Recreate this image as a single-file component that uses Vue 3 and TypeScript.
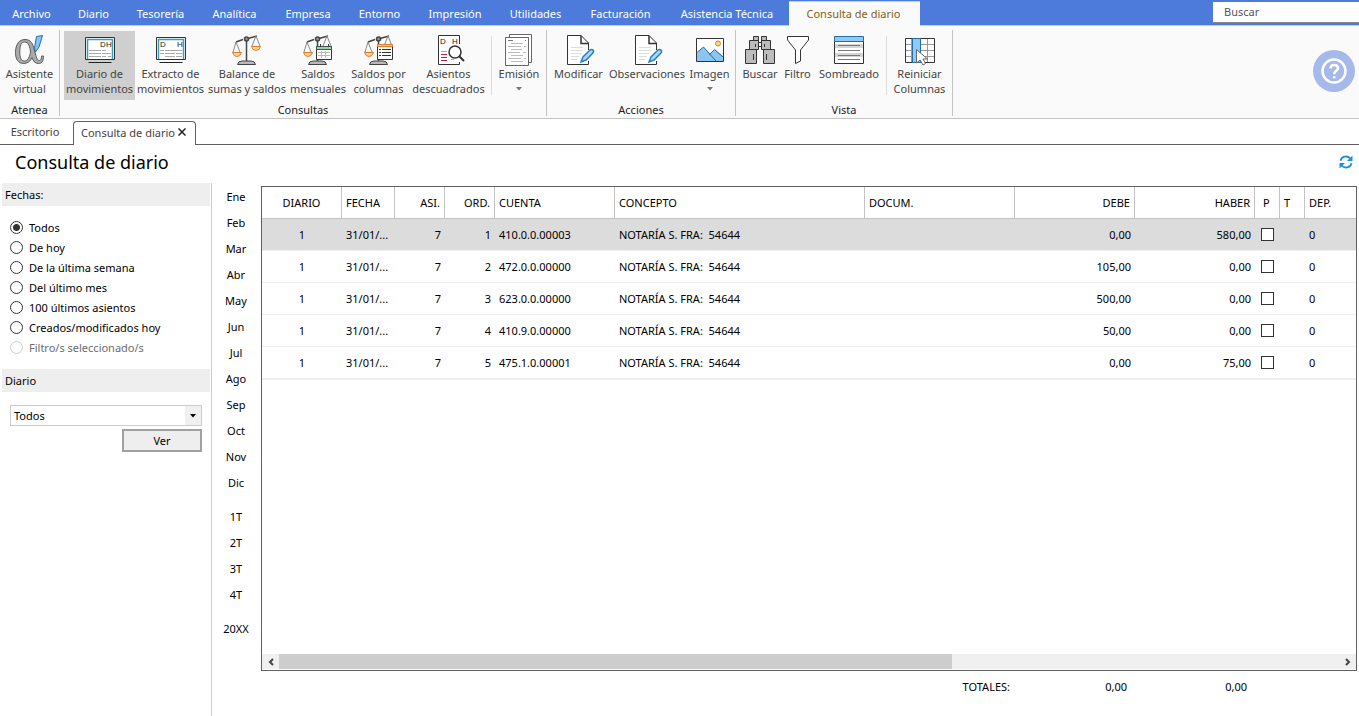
<script setup lang="ts">
import { ref } from 'vue'

interface Tool { icon: string; lines: string[]; width: number; active?: boolean; drop?: boolean; sep?: boolean }
interface Group { label: string; tight?: boolean; tools: Tool[] }

const menus = ['Archivo', 'Diario', 'Tesorería', 'Analítica', 'Empresa', 'Entorno', 'Impresión', 'Utilidades', 'Facturación', 'Asistencia Técnica', 'Consulta de diario']

const groups: Group[] = [
  { label: 'Atenea', tight: true, tools: [{ icon: 'alpha', lines: ['Asistente', 'virtual'], width: 57 }] },
  {
    label: 'Consultas',
    tight: true,
    tools: [
      { icon: 'journal', lines: ['Diario de', 'movimientos'], width: 71, active: true },
      { icon: 'extract', lines: ['Extracto de', 'movimientos'], width: 71 },
      { icon: 'balance', lines: ['Balance de', 'sumas y saldos'], width: 82 },
      { icon: 'monthly', lines: ['Saldos', 'mensuales'], width: 60 },
      { icon: 'columns', lines: ['Saldos por', 'columnas'], width: 61 },
      { icon: 'unbalanced', lines: ['Asientos', 'descuadrados'], width: 79 },
      { icon: 'issue', lines: ['Emisión'], width: 54, drop: true, sep: true },
    ],
  },
  {
    label: 'Acciones',
    tools: [
      { icon: 'edit', lines: ['Modificar'], width: 55 },
      { icon: 'edit', lines: ['Observaciones'], width: 82 },
      { icon: 'image', lines: ['Imagen'], width: 43, drop: true },
    ],
  },
  {
    label: 'Vista',
    tight: true,
    tools: [
      { icon: 'search', lines: ['Buscar'], width: 40 },
      { icon: 'filter', lines: ['Filtro'], width: 35 },
      { icon: 'shade', lines: ['Sombreado'], width: 68 },
      { icon: 'reset', lines: ['Reiniciar', 'Columnas'], width: 65, sep: true },
    ],
  },
]

const dates = ['Todos', 'De hoy', 'De la última semana', 'Del último mes', '100 últimos asientos', 'Creados/modificados hoy', 'Filtro/s seleccionado/s']
const picked = ref('Todos')
const journal = ref('Todos')

const periods = [
  ['Ene', 'Feb', 'Mar', 'Abr', 'May', 'Jun', 'Jul', 'Ago', 'Sep', 'Oct', 'Nov', 'Dic'],
  ['1T', '2T', '3T', '4T'],
  ['20XX'],
]

const columns = [
  { key: 'diario', title: 'DIARIO', align: 'center' },
  { key: 'fecha', title: 'FECHA', align: 'left' },
  { key: 'asi', title: 'ASI.', align: 'right' },
  { key: 'ord', title: 'ORD.', align: 'right' },
  { key: 'cuenta', title: 'CUENTA', align: 'left' },
  { key: 'concepto', title: 'CONCEPTO', align: 'left' },
  { key: 'docum', title: 'DOCUM.', align: 'left' },
  { key: 'debe', title: 'DEBE', align: 'right' },
  { key: 'haber', title: 'HABER', align: 'right' },
  { key: 'p', title: 'P', align: 'mark' },
  { key: 't', title: 'T', align: 'left' },
  { key: 'dep', title: 'DEP.', align: 'left' },
]

const rows = [
  ['410.0.0.00003', '0,00', '580,00'],
  ['472.0.0.00000', '105,00', '0,00'],
  ['623.0.0.00000', '500,00', '0,00'],
  ['410.9.0.00000', '50,00', '0,00'],
  ['475.1.0.00001', '0,00', '75,00'],
].map(([cuenta, debe, haber], i): Record<string, string> => ({
  diario: '1', fecha: '31/01/...', asi: '7', ord: String(i + 1), cuenta, concepto: 'NOTARÍA S. FRA:  54644', docum: '', debe, haber, t: '', dep: '0',
}))
</script>

<template>
  <div class="app">
    <header class="menubar">
      <nav class="menus">
        <button v-for="(m, i) in menus" :key="m" type="button" class="menu" :class="{ current: i === menus.length - 1 }">{{ m }}</button>
      </nav>
      <input class="search" type="text" placeholder="Buscar" aria-label="Buscar" />
    </header>

    <section class="ribbon">
      <div v-for="g in groups" :key="g.label" class="group">
        <div class="tools" :class="{ tight: g.tight }">
          <template v-for="t in g.tools" :key="t.lines[0]">
            <span v-if="t.sep" class="divider"></span>
            <button type="button" class="tool" :class="{ active: t.active }" :style="{ width: t.width + 'px' }">
              <svg class="icon" viewBox="0 0 32 32" aria-hidden="true">
                <g v-if="t.icon === 'alpha'">
                  <path d="M11 5.500C17 5.500 19 10 20 15L21.500 20C22.500 24 23.500 26.500 25.500 26.500C27 26.500 27.500 24.500 27.500 22H29.500C29.500 27 28 29.500 24.500 29.500C21 29.500 19 27 18 23.500C16.500 27 14 29.500 9.500 29.500C4 29.500 1.500 25 1.500 18.500C1.500 10.500 5 5.500 11 5.500ZM10.500 8C7 8 5.800 12 5.800 18C5.800 23.500 7 27 10.500 27C14 27 16 22 16.500 18C16 12.500 14.500 8 10.500 8Z" fill="#aaa" stroke="#5c5c5c" fill-rule="evenodd" />
                  <path d="M22.500 2.500L28.500 1.500L25 13L21.500 18L20.500 14Z" fill="#83c4f3" stroke="#246fae" />
                </g>
                <g v-else-if="t.icon === 'journal' || t.icon === 'extract'">
                  <path d="M1.500 3.500H30.500V25.500H1.500Z" fill="#fff" stroke="#333" />
                  <path d="M3.500 25V5.500H28.500V25" fill="none" stroke="#3c9fb2" stroke-width="1.500" />
                  <path d="M4.500 28.500H27.500" stroke="#222" />
                  <path v-if="t.icon === 'journal'" d="M5 16.500H17M5 19.500H17M5 22.500H17M18 16.500H22M18 19.500H27M18 22.500H22M24 22.500H27" stroke="#aaa" />
                  <path v-else d="M5 16.500H9M10 16.500H27M5 19.500H9M10 19.500H20M21 19.500H27M10 22.500H20M21 22.500H27" stroke="#aaa" />
                  <text :x="t.icon === 'journal' ? 16 : 5" y="13" class="letter">D</text>
                  <text x="22" y="13" class="letter">H</text>
                </g>
                <g v-else-if="['balance', 'monthly', 'columns'].includes(t.icon)" fill="none" stroke="#444">
                  <path d="M15.500 6V27M5 8L12 5.500M17 4.500L26 2" stroke-width="1.500" />
                  <circle cx="15.500" cy="5" r="2" fill="#999" stroke-width="1.500" />
                  <path d="M5 8L2 18M5 8L9 18M25 2L21 12M25 2L29 12" stroke="#888" />
                  <path d="M1.500 18.500H10.500Q9.500 22.500 6 22.500Q2.500 22.500 1.500 18.500Z" fill="#ffd28a" stroke="#dc7f35" />
                  <path v-if="t.icon === 'balance'" d="M20.500 12.500H29.500Q28.500 16.500 25 16.500Q21.500 16.500 20.500 12.500Z" fill="#ffd28a" stroke="#dc7f35" />
                  <path d="M6.500 30.500Q7 27 11 27H20Q24 27 24.500 30.500Z" fill="#b9b9b9" />
                  <g v-if="t.icon === 'monthly'">
                    <path d="M14.500 12.500H29.500V25.500H14.500Z" fill="#fff" stroke="#333" />
                    <path d="M14.500 12.500H29.500V15.500H14.500Z" fill="#9bd49e" stroke="#3e5a48" />
                    <path d="M18.500 10V13M26.500 10V13" stroke="#333" />
                    <path d="M16 18.500H28M16 21.500H28M19.500 17V24M23.500 17V24" stroke="#bbb" />
                  </g>
                  <g v-if="t.icon === 'columns'">
                    <path d="M14.500 11.500H29.500V25.500H14.500Z" fill="#fff" stroke="#333" />
                    <path d="M14.500 10.500H29.500V12.500H14.500Z" fill="#ffc681" stroke="#dc7f35" />
                    <path d="M16 15.500H28M16 18.500H28M16 21.500H28" stroke="#333" stroke-dasharray="2 1 9 1" />
                  </g>
                </g>
                <g v-else-if="t.icon === 'unbalanced'" fill="none" stroke="#333">
                  <path d="M26.500 10V1.500H5.500V30.500H26.500V28" fill="#fff" />
                  <text x="7" y="10" class="letter">D</text><text x="19" y="10" class="letter">H</text>
                  <path d="M8 17.500H14M18 25.500H21" stroke="#aaa" />
                  <path d="M8 20.500H14M8 23.500H14M8 26.500H14" stroke="#b51f42" />
                  <circle cx="22" cy="18" r="6" fill="#fff" stroke-width="1.500" />
                  <path d="M26 22L31 27" stroke-width="2" />
                </g>
                <g v-else-if="t.icon === 'issue'" fill="#fff" stroke="#666">
                  <path d="M6.500 .500H28.500V28.500H6.500Z" />
                  <path d="M2.500 3.500H25.500V31.500H2.500Z" />
                  <path d="M5 6.500H10M22 6.500H23" stroke="#777" />
                  <path d="M8 9.500H20M5 12.500H18M21 12.500H23M8 15.500H19M5 18.500H17M20 18.500H23M8 21.500H20M5 24.500H18M21 24.500H23M8 27.500H20" stroke="#bbb" />
                </g>
                <g v-else-if="t.icon === 'edit'" fill="none" stroke="#333">
                  <path d="M25.500 27V30.500H4.500V1.500H18L25.500 9V16" fill="#fff" />
                  <path d="M18 1.500V9.500H25.500" stroke-width="1.500" />
                  <path d="M8 13.500H20M8 16.500H20M8 19.500H18M8 22.500H16M8 25.500H14" stroke="#ddd" />
                  <path d="M18 28L20 23L27 16Q29 15 30.500 16.500Q31 18 29.500 19.500L23 26Z" fill="#a8d8fa" stroke="#2c7fbd" stroke-width="1.500" />
                </g>
                <g v-else-if="t.icon === 'image'">
                  <path d="M2.500 4.500H29.500V27.500H2.500Z" fill="#fff" stroke="#333" />
                  <path d="M3 19L9.500 13L22 27H3Z" fill="#8cc5ee" />
                  <path d="M14 22L21 15.500L29 22V27H18Z" fill="#8cc5ee" />
                  <path d="M3 18.500L9.500 13L22 27M15 21L20.500 15.500L29 23" fill="none" stroke="#246eab" />
                  <circle cx="24" cy="9.500" r="2.500" fill="#ffd28a" stroke="#dc7f35" />
                </g>
                <g v-else-if="t.icon === 'search'" fill="#bcbcbc" stroke="#333">
                  <path d="M9.500 2.500H14.500V6.500H9.500ZM17.500 2.500H22.500V6.500H17.500Z" />
                  <path d="M5.500 6.500H14.500V15.500H5.500ZM17.500 6.500H26.500V15.500H17.500Z" />
                  <path d="M1.500 15.500H12.500V29.500H1.500ZM19.500 15.500H30.500V29.500H19.500Z" />
                  <path d="M14 8.500H18M14 12.500H18M11.500 10V13M20.500 10V13M9.500 20V26M22.500 20V26" />
                </g>
                <path v-else-if="t.icon === 'filter'" d="M5.500 2.500H26.500V6L18.500 16V27L13.500 29.500V16L5.500 6Z" fill="#fff" stroke="#333" />
                <g v-else-if="t.icon === 'shade'">
                  <path d="M1.500 3.500H30.500V29.500H1.500Z" fill="#fff" stroke="#333" />
                  <path d="M2 10H30V14H2ZM2 19H30V23H2Z" fill="#d5d5d5" />
                  <path d="M1.500 2.500H30.500V7.500H1.500Z" fill="#8fcaf5" stroke="#246eab" />
                  <path d="M5 11.500H27M5 16.500H27M5 21.500H27M5 25.500H27" stroke="#777" />
                </g>
                <g v-else>
                  <path d="M1.500 4.500H30.500V28.500H1.500Z" fill="#fff" stroke="#333" />
                  <path d="M2 10.500H30M2 16.500H30M2 22.500H30M7.500 5V28M23.500 5V28" stroke="#999" />
                  <path d="M8.500 4.500H16.500V28.500H8.500Z" fill="#8fcaf5" stroke="#246eab" />
                  <path d="M12.500 15.500V29L16 26L19 31L21.500 29.500L19 25H23.500Z" fill="#fff" stroke="#666" />
                </g>
              </svg>
              <span v-for="l in t.lines" :key="l" class="line">{{ l }}</span>
              <svg v-if="t.drop" class="caret" viewBox="0 0 6 4" aria-hidden="true"><path d="M0 0H6L3 3.500Z" fill="#777" /></svg>
            </button>
          </template>
        </div>
        <div class="group-label">{{ g.label }}</div>
      </div>
      <button type="button" class="help" aria-label="Ayuda">
        <svg viewBox="0 0 42 42" aria-hidden="true" fill="none" stroke="#fff" stroke-width="2.500">
          <circle cx="21" cy="21" r="11.500" />
          <path d="M17.500 18.500C17.500 13.800 25 14 25 18.300C25 21 21.200 20.800 21.200 24.200" />
          <circle cx="21.200" cy="27.200" r="1.300" fill="#fff" stroke="none" />
        </svg>
      </button>
    </section>

    <nav class="tabs">
      <button type="button" class="tab">Escritorio</button>
      <div class="tab open">
        <button type="button" class="tab-name">Consulta de diario</button>
        <button type="button" class="close" aria-label="Cerrar"><svg viewBox="0 0 8 8" aria-hidden="true"><path d="M.500 .500L7.500 7.500M7.500 .500L.500 7.500" stroke="#222" stroke-width="1.500" /></svg></button>
      </div>
    </nav>

    <div class="heading">
      <h1>Consulta de diario</h1>
      <button type="button" class="refresh" aria-label="Actualizar">
        <svg viewBox="0 0 14 14" aria-hidden="true">
          <path d="M1.500 5.800C2.500 1 8.500 .200 11.300 3.500M12.500 8.200C11.500 13 5.500 13.800 2.700 10.500" fill="none" stroke="#2590cf" stroke-width="1.800" />
          <path d="M13.500 .500V6H8ZM.500 13.500V8H6Z" fill="#2590cf" />
        </svg>
      </button>
    </div>

    <main class="content">
      <aside class="filters">
        <h2>Fechas:</h2>
        <div class="radios">
          <label v-for="(d, i) in dates" :key="d" class="radio">
            <input v-model="picked" type="radio" name="fechas" :value="d" :disabled="i === dates.length - 1" /><span>{{ d }}</span>
          </label>
        </div>
        <h2>Diario</h2>
        <div class="form">
          <div class="combo">
            <select v-model="journal" aria-label="Diario"><option>Todos</option></select>
            <span class="combo-arrow"><svg viewBox="0 0 6 4" aria-hidden="true"><path d="M0 0H6L3 3.500Z" /></svg></span>
          </div>
          <button type="button" class="view">Ver</button>
        </div>
      </aside>

      <div class="periods">
        <div v-for="(p, i) in periods" :key="i" class="period-set">
          <button v-for="m in p" :key="m" type="button">{{ m }}</button>
        </div>
      </div>

      <section class="result">
        <div class="grid-box">
          <table>
            <colgroup><col v-for="c in columns" :key="c.key" :class="'c-' + c.key" /></colgroup>
            <thead>
              <tr><th v-for="c in columns" :key="c.key" :class="c.align">{{ c.title }}</th></tr>
            </thead>
            <tbody>
              <tr v-for="(r, i) in rows" :key="i" :class="{ selected: i === 0 }">
                <td v-for="c in columns" :key="c.key" :class="c.align">
                  <input v-if="c.key === 'p'" type="checkbox" :aria-label="'P ' + r.ord" />
                  <template v-else>{{ r[c.key] }}</template>
                </td>
              </tr>
            </tbody>
          </table>
          <div class="scroll">
            <button type="button" aria-label="Izquierda"><svg viewBox="0 0 8 8" aria-hidden="true"><path d="M6 1L3 4L6 7" /></svg></button>
            <div class="track"><div class="thumb"></div></div>
            <button type="button" aria-label="Derecha"><svg viewBox="0 0 8 8" aria-hidden="true"><path d="M2 1L5 4L2 7" /></svg></button>
          </div>
        </div>
        <div class="totals"><span>TOTALES:</span><span>0,00</span><span>0,00</span></div>
      </section>
    </main>
  </div>
</template>

<style>
body { margin: 0; background: #fff; }
</style>

<style scoped>
.app { display: flex; flex-direction: column; min-height: 100vh; font: 11px/15px "Noto Sans", "Open Sans", sans-serif; color: #000; }
.app *, .app { box-sizing: border-box; }
button, input, select { font: inherit; color: inherit; margin: 0; padding: 0; border: 0; background: none; border-radius: 0; }
svg { display: block; }

.menubar { display: flex; justify-content: space-between; height: 26px; background: #4d7bdb; border-bottom: 1px solid #c6cbd8; }
.menus { display: grid; grid-template-columns: 64px 60px 74px 74px 73px 70px 81px 80px 90px 123px 131px; }
.menu { color: #fff; padding: 2px 1px 0 0; white-space: nowrap; }
.menu.current { margin: 1px 0 -1px; padding: 0 2px 2px 0; background: #fafafa; color: #836016; border-top: 1px solid #d6cfae; }
.search { width: 146px; height: 21px; margin-top: 2px; padding: 0 11px 2px; background: #fff; border-bottom: 1px solid #888; outline: 0; }
.search::placeholder { color: #555; opacity: 1; }

.ribbon { display: flex; height: 93px; background: #fafafa; border-bottom: 1px solid #c4c4c4; color: #444; }
.group { display: flex; flex-direction: column; margin: 4px 0 2px; padding-top: 1px; border-right: 1px solid #c4c4c4; }
.tools { display: flex; flex: none; height: 69px; padding: 0 4px; }
.tools.tight { padding-right: 0; }
.group:first-child .tools { padding: 0 1px; }
.tool { display: flex; flex-direction: column; align-items: center; padding-top: 3px; white-space: nowrap; }
.tool.active { background: #cfcfcf; }
.icon { width: 32px; height: 32px; flex: none; }
.letter { font: 8px "Liberation Sans", sans-serif; fill: #222; stroke: none; }
.line { display: block; line-height: 15px; }
.caret { width: 6px; height: 4px; margin-top: 6px; }
.divider { width: 1px; margin: 5px 0 5px 3px; background: #ddd; }
.group-label { text-align: center; padding-top: 3px; line-height: 13px; color: #222; }
.help { width: 42px; height: 42px; margin: 24px 4px 0 auto; border-radius: 50%; background: #a5b9ea; }

.tabs { display: flex; height: 26px; border-bottom: 1px solid #606060; color: #444; padding-top: 2px; }
.tab { width: 73px; padding: 0 3px 2px 0; }
.tab.open { display: flex; align-items: center; justify-content: space-between; width: 123px; height: 24px; padding: 0 9px 3px 7px; background: #fff; border: 1px solid #606060; border-bottom: 0; border-radius: 4px 4px 0 0; }
.close svg { width: 8px; height: 8px; }

.heading { display: flex; align-items: center; justify-content: space-between; height: 38px; padding: 0 6px 4px 15px; }
h1 { margin: 0; font-size: 18px; line-height: 24px; font-weight: 400; }
.refresh svg { width: 14px; height: 14px; }

.content { display: flex; flex: 1; }
.filters { width: 212px; padding: 0 1px 0 2px; border-right: 1px solid #ccc; }
h2 { margin: 0; padding: 4px 3px; height: 23px; background: #eee; font-size: 11px; line-height: 15px; font-weight: 400; }
.radios { padding: 11px 8px 12px; }
.radio { display: flex; align-items: center; gap: 6px; height: 20px; }
.radio input { appearance: none; width: 13px; height: 13px; border: 1px solid #333; border-radius: 50%; background: #fff; }
.radio input:checked { background: radial-gradient(circle, #333 0 3px, #fff 4px); }
.radio input:disabled { border-color: #ccc; }
.radio input:disabled + span { color: #6d6d6d; }
.form { padding: 13px 8px 0; }
.combo { position: relative; height: 21px; }
.combo select { appearance: none; width: 100%; height: 21px; padding: 0 20px 0 3px; border: 1px solid #ccc; background: #fff; }
.combo-arrow { position: absolute; top: 1px; right: 1px; width: 16px; height: 19px; display: grid; place-items: center; background: #f0f0f0; pointer-events: none; }
.combo-arrow svg { width: 6px; height: 4px; }
.view { display: block; width: 80px; height: 23px; margin: 3px 0 0 auto; background: #eee; border: 2px solid #a0a0a0; }

.periods { width: 49px; padding-right: 1px; }
.period-set { margin-bottom: 8px; }
.period-set button { display: block; width: 100%; height: 26px; }

.result { display: flex; flex: 1; flex-direction: column; min-width: 0; padding: 3px 2px 0 0; }
.grid-box { display: flex; flex: 1; flex-direction: column; border: 1px solid #606060; }
table { width: 100%; table-layout: fixed; border-collapse: separate; border-spacing: 0; border-bottom: 1px solid #eee; }
.c-diario { width: 80px; } .c-fecha { width: 53px; } .c-asi, .c-ord { width: 50px; }
.c-cuenta, .c-debe, .c-haber { width: 120px; } .c-concepto { width: 250px; } .c-docum { width: 150px; } .c-p, .c-t { width: 25px; }
th, td { height: 32px; padding: 0 4px; text-align: left; font-weight: 400; white-space: pre; overflow: hidden; }
th { border-right: 1px solid #c4c4c4; border-bottom: 1px solid #c4c4c4; }
th:last-child { border-right: 0; }
td { border-bottom: 1px solid #eee; }
.center { text-align: center; }
.right { text-align: right; }
th.mark { padding-left: 8px; }
td.mark { padding-left: 6px; }
.selected td { background: #dcdcdc; }
td input { appearance: none; display: block; width: 13px; height: 13px; border: 1px solid #333; background: #fff; }
.scroll { display: flex; height: 16px; margin-top: auto; background: #f0f0f0; border-bottom: 1px solid #fff; }
.scroll button { display: grid; place-items: center; width: 17px; }
.scroll svg { width: 8px; height: 8px; fill: none; stroke: #444; stroke-width: 2; }
.track { flex: 1; }
.thumb { width: 63.5%; height: 15px; background: #cdcdcd; }
.totals { display: grid; grid-template-columns: 749px 117px 120px; height: 45px; padding-top: 8px; text-align: right; }
</style>
